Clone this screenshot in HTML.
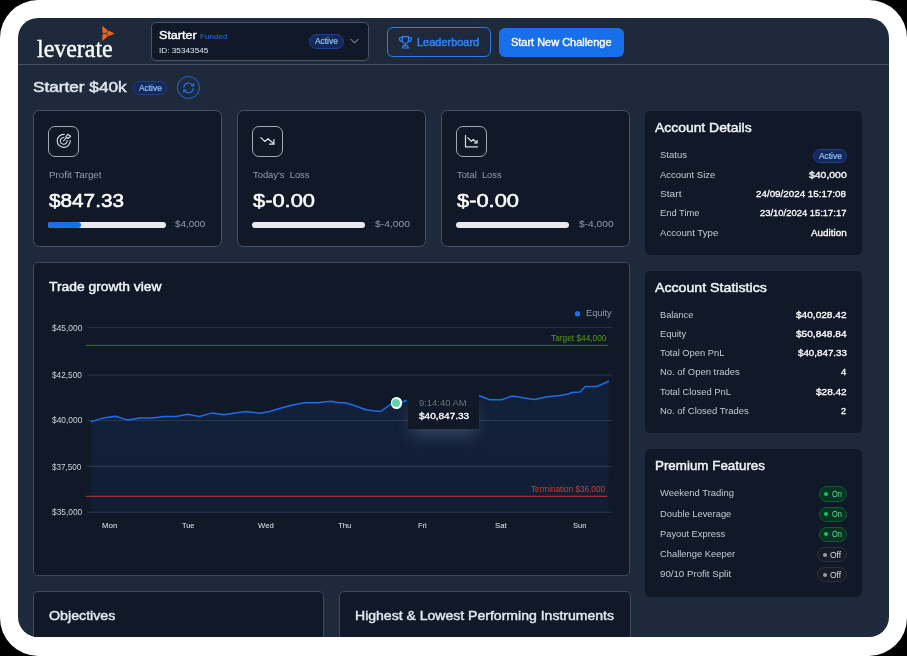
<!DOCTYPE html>
<html><head><meta charset="utf-8"><title>Dashboard</title>
<style>
*{box-sizing:border-box;margin:0;padding:0}
html,body{width:907px;height:656px;overflow:hidden;background:#000;font-family:"Liberation Sans",sans-serif}
#frame{position:absolute;left:0;top:0;width:907px;height:656px;background:#fff;border-radius:38px}
#app{position:absolute;left:0;top:0;width:907px;height:656px;background:#1e293b;clip-path:inset(18px 18px 19px 18px round 20px)}
#texts{position:absolute;left:0;top:0;width:907px;height:656px;clip-path:inset(18px 18px 19px 18px round 20px);will-change:transform}
.t{position:absolute;white-space:pre;line-height:1;transform-origin:0 0}
.a{position:absolute}
.card{position:absolute;background:#111827;border:1px solid #465369;border-radius:6.5px}
.panel{position:absolute;background:#111827;border-radius:5.5px}
.badge{position:absolute;border:1px solid #1c3f8f;background:#14285a;border-radius:8px}
.ibox{position:absolute;width:31px;height:31px;border:1px solid #a3abb8;border-radius:7px}
.bar{position:absolute;height:5.5px;border-radius:3px;background:#e7e9ee}
.on{position:absolute;width:28.2px;height:15.2px;border-radius:8px;border:1px solid #0d5c36;background:#06351f}
.off{position:absolute;width:29.8px;height:14.9px;border-radius:8px;border:1px solid #2b313f;background:#161b26}
.dot{position:absolute;width:4.2px;height:4.2px;border-radius:50%}
svg{position:absolute;overflow:visible}

</style></head><body>
<div id="frame"></div>
<div id="app">
<!-- header -->
<div class="a" style="left:18px;top:64px;width:871px;height:1px;background:#435066"></div>
<svg style="left:98px;top:22px" width="22" height="22" viewBox="0 0 22 22"><g fill="#ee641f"><path d="M4.1 3.7 L9.8 8.4 L8.3 11.1 L4.7 11.1 Z"/><path d="M4.1 19 L4.7 11.8 L8.3 11.8 L9.8 14.5 Z"/><path d="M16.6 11.4 L10.4 8.6 L8.9 11.4 L10.4 14.2 Z"/></g></svg>
<div class="a" style="left:150.6px;top:21.7px;width:218px;height:39.1px;border:1px solid #4a5568;border-radius:5px;background:#111827"></div>
<div class="badge" style="left:309px;top:34px;width:35px;height:15px"></div>
<svg style="left:350px;top:38px" width="10" height="8" viewBox="0 0 10 8"><path d="M1 1.4 L4.5 5 L8 1.4" stroke="#aab3c0" stroke-width="1" fill="none" stroke-linecap="round" stroke-linejoin="round"/></svg>
<div class="a" style="left:387px;top:27px;width:104px;height:30px;border:1px solid #2f7be6;border-radius:6px"></div>
<svg style="left:394px;top:32px" width="24" height="20" viewBox="0 0 24 20"><g stroke="#3384f0" stroke-width="1.15" fill="none" stroke-linecap="round" stroke-linejoin="round"><path d="M8.3 4.6 H14.5 V8 C14.5 10.2 12.9 11.5 11.4 11.5 C9.9 11.5 8.3 10.2 8.3 8 Z"/><path d="M8.3 5.6 H6.2 C5.2 5.6 5.3 6.6 5.4 7.2 C5.6 8.6 6.8 9.6 8.6 9.8"/><path d="M14.5 5.6 H16.6 C17.6 5.6 17.5 6.6 17.4 7.2 C17.2 8.6 16 9.6 14.2 9.8"/><path d="M11.4 11.5 V13.3"/><path d="M8.3 16 L9.3 13.6 H13.5 L14.5 16 Z"/></g></svg>
<div class="a" style="left:499px;top:28px;width:125px;height:29px;border-radius:6px;background:#186fec"></div>
<!-- title row -->
<div class="badge" style="left:133px;top:80.6px;width:34px;height:14.2px"></div>
<div class="a" style="left:176.9px;top:76.3px;width:23.2px;height:23.2px;border:1px solid #1f69d8;border-radius:50%"></div>
<svg style="left:172px;top:72px" width="32" height="32" viewBox="0 0 32 32"><g stroke="#1f74ea" stroke-width="1.15" fill="none" stroke-linecap="round" stroke-linejoin="round"><path d="M11.9 15.2 A4.8 4.8 0 0 1 20.9 13.6"/><path d="M21.3 16.6 A4.8 4.8 0 0 1 12.3 18.2"/><path d="M19.3 13.6 L21.6 14.2 L21.9 11.9 Z" fill="#1f74ea" stroke-width="0.7"/><path d="M13.9 18.2 L11.6 17.6 L11.3 19.9 Z" fill="#1f74ea" stroke-width="0.7"/></g></svg>
<!-- stat cards -->
<div class="card" style="left:33px;top:110px;width:189px;height:137px"></div>
<div class="card" style="left:237px;top:110px;width:189px;height:137px"></div>
<div class="card" style="left:441px;top:110px;width:189px;height:137px"></div>
<div class="ibox" style="left:48px;top:125.7px"></div>
<div class="ibox" style="left:252px;top:125.7px"></div>
<div class="ibox" style="left:456px;top:125.7px"></div>
<svg style="left:52px;top:129px" width="24" height="24" viewBox="0 0 24 24"><g stroke="#d3d7de" stroke-width="1.15" fill="none" stroke-linecap="round" stroke-linejoin="round"><path d="M18.2 11.5 A6.5 6.5 0 1 1 12.2 5.4"/><path d="M15.1 11.6 A3.4 3.4 0 1 1 12 8.5"/><path d="M11.4 11.9 L14.7 8.6"/><path d="M13.8 7.9 L15.8 5.3 L18.6 7.3 L16.1 9.5 Z"/></g></svg>
<svg style="left:256px;top:129px" width="24" height="24" viewBox="0 0 24 24"><g stroke="#e3e6eb" stroke-width="1.25" fill="none" stroke-linecap="round" stroke-linejoin="round"><path d="M4.8 8.6 L8.8 12.4 L12.1 9.7 L17.8 14.9"/><path d="M17.9 10.7 V15 H13.4"/></g></svg>
<svg style="left:460px;top:129px" width="24" height="24" viewBox="0 0 24 24"><g stroke="#d9dce3" stroke-width="1.2" fill="none" stroke-linecap="round" stroke-linejoin="round"><path d="M5.5 6.3 V17.9 H17.4"/><path d="M7.9 8.8 L11.3 12.3 L13.2 10.4 L16.4 13.3"/><path d="M17.4 11.4 V14.3 H14.5 Z" fill="#d9dce3" stroke-width="0.6"/></g></svg>
<div class="bar" style="left:48.3px;top:222px;width:118.2px"></div>
<div class="bar" style="left:48.3px;top:222px;width:32.6px;background:#186fec"></div>
<div class="bar" style="left:252.3px;top:222px;width:113px"></div>
<div class="bar" style="left:456.3px;top:222px;width:113px"></div>
<!-- right panels -->
<div class="panel" style="left:644.5px;top:111px;width:217.5px;height:143.6px"></div>
<div class="badge" style="left:812.8px;top:148.7px;width:34.2px;height:14.4px"></div>
<div class="panel" style="left:644.5px;top:271px;width:217.5px;height:162.4px"></div>
<div class="panel" style="left:644.5px;top:448.6px;width:217.5px;height:148.6px"></div>
<div class="on" style="left:818.8px;top:486.4px"></div><div class="dot" style="left:824px;top:492.0px;background:#1fbe6e"></div>
<div class="on" style="left:818.8px;top:506.6px"></div><div class="dot" style="left:824px;top:512.2px;background:#1fbe6e"></div>
<div class="on" style="left:818.8px;top:526.6px"></div><div class="dot" style="left:824px;top:532.2px;background:#1fbe6e"></div>
<div class="off" style="left:817.2px;top:546.9px"></div><div class="dot" style="left:822.8px;top:552.6px;background:#979ca8"></div>
<div class="off" style="left:817.2px;top:567.2px"></div><div class="dot" style="left:822.8px;top:572.9px;background:#979ca8"></div>
<!-- chart -->
<div class="card" style="left:33px;top:262px;width:597px;height:314px;border-radius:5px;border-color:#3d495e"></div>
<svg style="left:0;top:0" width="907" height="656" viewBox="0 0 907 656">
<defs><linearGradient id="g" x1="0" y1="0" x2="0" y2="1"><stop offset="0" stop-color="#1b66e0" stop-opacity="0.105"/><stop offset="1" stop-color="#1b66e0" stop-opacity="0.07"/></linearGradient></defs>
<g stroke="#2a364c" stroke-width="1"><path d="M87.5 327.3 H612 M87.5 375 H612 M87.5 420.5 H612 M86 466.4 H612 M87.8 512.2 H612"/></g>
<path d="M91.2 421.6 L103.4 417.9 L115.2 416.2 L127.4 419.9 L140.0 418.0 L152.3 418.0 L164.0 416.5 L176.0 416.5 L187.6 414.3 L199.3 416.5 L212.3 412.9 L223.6 414.7 L235.2 412.9 L245.8 411.5 L260.0 413.3 L269.8 411.5 L281.1 408.0 L291.7 405.2 L304.0 402.7 L318.2 402.7 L330.5 401.3 L339.4 402.7 L345.4 402.7 L353.5 405.2 L365.9 409.8 L372.9 410.8 L380.7 411.5 L391.5 403.7 L396.2 402.9 L402.2 402.2 L405.1 400.8 L416.0 399.0 L430.0 398.0 L445.0 399.0 L460.0 397.0 L470.0 396.5 L478.9 395.5 L489.7 399.7 L501.7 399.7 L512.3 396.0 L522.9 397.8 L534.5 399.5 L545.8 397.0 L560.0 395.6 L567.0 394.2 L572.3 392.5 L580.0 392.1 L585.3 386.5 L597.0 386.5 L608.6 381.2 L608.6 512.2 L91.2 512.2 Z" fill="url(#g)"/>
<g stroke="#2a3850" stroke-width="1" opacity="0.8"><path d="M91.5 420.5 H608.5 M91.5 466.4 H608.5"/></g>
<path d="M86 345.4 H608.2" stroke="#427c12" stroke-width="1"/>
<path d="M86 496.3 H607.2" stroke="#bb3a2c" stroke-width="1"/>
<path d="M91.2 421.6 L103.4 417.9 L115.2 416.2 L127.4 419.9 L140.0 418.0 L152.3 418.0 L164.0 416.5 L176.0 416.5 L187.6 414.3 L199.3 416.5 L212.3 412.9 L223.6 414.7 L235.2 412.9 L245.8 411.5 L260.0 413.3 L269.8 411.5 L281.1 408.0 L291.7 405.2 L304.0 402.7 L318.2 402.7 L330.5 401.3 L339.4 402.7 L345.4 402.7 L353.5 405.2 L365.9 409.8 L372.9 410.8 L380.7 411.5 L391.5 403.7 L396.2 402.9 L402.2 402.2 L405.1 400.8 L416.0 399.0 L430.0 398.0 L445.0 399.0 L460.0 397.0 L470.0 396.5 L478.9 395.5 L489.7 399.7 L501.7 399.7 L512.3 396.0 L522.9 397.8 L534.5 399.5 L545.8 397.0 L560.0 395.6 L567.0 394.2 L572.3 392.5 L580.0 392.1 L585.3 386.5 L597.0 386.5 L608.6 381.2" stroke="#1a6eea" stroke-width="1.5" fill="none" stroke-linejoin="round" stroke-linecap="round"/>
<circle cx="577.5" cy="313.8" r="2.7" fill="#1a6eea"/>
</svg>
<div class="a" style="left:408.4px;top:394px;width:70.6px;height:34.7px;background:#111827;box-shadow:0 10px 16px -3px rgba(140,160,200,0.30)"></div>
<svg style="left:400px;top:394px" width="10" height="12" viewBox="0 0 10 12"><path d="M5 3.5 L8.6 0 V9 Z" fill="#111827"/></svg>
<div class="a" style="left:390.5px;top:397.2px;width:11.4px;height:11.4px;border-radius:50%;background:#fff"></div>
<div class="a" style="left:391.9px;top:398.6px;width:8.6px;height:8.6px;border-radius:50%;background:#5fd4a6"></div>
<!-- bottom cards -->
<div class="card" style="left:33px;top:591px;width:291px;height:60px;border-radius:5px;border-color:#3d495e"></div>
<div class="card" style="left:339px;top:591px;width:291.5px;height:60px;border-radius:5px;border-color:#3d495e"></div>
</div>

<div id="texts">
<span class="t" id="t0" style="left:36.8px;top:35.9px;font-size:25px;color:#ffffff;font-family:'Liberation Serif',serif;transform:scaleX(0.9569);-webkit-text-stroke:0.4px #fff;">leverate</span>
<span class="t" id="t1" style="left:158.6px;top:29.9px;font-size:11.8px;color:#ffffff;transform:scaleX(1.0648);-webkit-text-stroke:0.40px #ffffff;">Starter</span>
<span class="t" id="t2" style="left:199.6px;top:33.1px;font-size:8px;color:#2673ea;transform:scaleX(1.0096);">Funded</span>
<span class="t" id="t3" style="left:158.6px;top:47.3px;font-size:8.1px;color:#e2e8f0;transform:scaleX(1.0163);">ID: 35343545</span>
<span class="t" id="t4" style="left:315.4px;top:37.4px;font-size:8.3px;color:#8fc0fb;transform:scaleX(1.0091);-webkit-text-stroke:0.2px #8fc0fb;">Active</span>
<span class="t" id="t5" style="left:416.8px;top:38.1px;font-size:10.3px;color:#3384f0;transform:scaleX(1.0650);-webkit-text-stroke:0.45px #3384f0;">Leaderboard</span>
<span class="t" id="t6" style="left:511.0px;top:37.7px;font-size:10.3px;color:#ffffff;transform:scaleX(1.0642);-webkit-text-stroke:0.35px #fff;">Start New Challenge</span>
<span class="t" id="t7" style="left:33.4px;top:79.7px;font-size:14.7px;color:#dfe4ec;transform:scaleX(1.1698);-webkit-text-stroke:0.5px #dfe4ec;">Starter $40k</span>
<span class="t" id="t8" style="left:138.7px;top:83.8px;font-size:8.3px;color:#8fc0fb;transform:scaleX(1.0091);-webkit-text-stroke:0.2px #8fc0fb;">Active</span>
<span class="t" id="t9" style="left:48.7px;top:170.2px;font-size:9.4px;color:#949dac;transform:scaleX(1.0422);">Profit Target</span>
<span class="t" id="t10" style="left:48.9px;top:190.6px;font-size:19.2px;color:#ffffff;transform:scaleX(1.0813);-webkit-text-stroke:0.55px #fff;">$847.33</span>
<span class="t" id="t11" style="left:175.2px;top:219.4px;font-size:9.5px;color:#949dac;transform:scaleX(1.0391);">$4,000</span>
<span class="t" id="t12" style="left:252.7px;top:170.2px;font-size:9.4px;color:#949dac;transform:scaleX(0.9997);">Today's  Loss</span>
<span class="t" id="t13" style="left:252.9px;top:190.6px;font-size:19.2px;color:#ffffff;transform:scaleX(1.1396);-webkit-text-stroke:0.55px #fff;">$-0.00</span>
<span class="t" id="t14" style="left:374.5px;top:219.4px;font-size:9.5px;color:#949dac;transform:scaleX(1.0827);">$-4,000</span>
<span class="t" id="t15" style="left:456.7px;top:170.2px;font-size:9.4px;color:#949dac;transform:scaleX(0.9949);">Total  Loss</span>
<span class="t" id="t16" style="left:456.9px;top:190.6px;font-size:19.2px;color:#ffffff;transform:scaleX(1.1396);-webkit-text-stroke:0.55px #fff;">$-0.00</span>
<span class="t" id="t17" style="left:578.8px;top:219.4px;font-size:9.5px;color:#949dac;transform:scaleX(1.0734);">$-4,000</span>
<span class="t" id="t18" style="left:655.2px;top:121.7px;font-size:12.8px;color:#f1f5f9;transform:scaleX(1.0863);-webkit-text-stroke:0.44px #f1f5f9;">Account Details</span>
<span class="t" id="t19" style="left:659.8px;top:151.2px;font-size:9.3px;color:#c3cad6;transform:scaleX(1.0243);">Status</span>
<span class="t" id="t20" style="left:659.8px;top:171.0px;font-size:9.3px;color:#c3cad6;transform:scaleX(1.0191);">Account Size</span>
<span class="t" id="t21" style="left:808.5px;top:171.1px;font-size:9.2px;color:#ffffff;transform:scaleX(1.1349);-webkit-text-stroke:0.31px #ffffff;">$40,000</span>
<span class="t" id="t22" style="left:659.8px;top:190.1px;font-size:9.3px;color:#c3cad6;transform:scaleX(1.0947);">Start</span>
<span class="t" id="t23" style="left:756.2px;top:190.2px;font-size:9.2px;color:#ffffff;transform:scaleX(1.0675);-webkit-text-stroke:0.31px #ffffff;">24/09/2024 15:17:08</span>
<span class="t" id="t24" style="left:659.8px;top:209.4px;font-size:9.3px;color:#c3cad6;transform:scaleX(1.0056);">End Time</span>
<span class="t" id="t25" style="left:759.8px;top:208.5px;font-size:9.2px;color:#ffffff;transform:scaleX(1.0248);-webkit-text-stroke:0.31px #ffffff;">23/10/2024 15:17:17</span>
<span class="t" id="t26" style="left:659.8px;top:228.6px;font-size:9.3px;color:#c3cad6;transform:scaleX(1.0379);">Account Type</span>
<span class="t" id="t27" style="left:810.5px;top:228.7px;font-size:9.2px;color:#ffffff;transform:scaleX(1.0752);-webkit-text-stroke:0.31px #ffffff;">Audition</span>
<span class="t" id="t28" style="left:818.6px;top:151.6px;font-size:8.3px;color:#8fc0fb;transform:scaleX(1.0091);-webkit-text-stroke:0.2px #8fc0fb;">Active</span>
<span class="t" id="t29" style="left:655.2px;top:281.7px;font-size:12.8px;color:#f1f5f9;transform:scaleX(1.1069);-webkit-text-stroke:0.44px #f1f5f9;">Account Statistics</span>
<span class="t" id="t30" style="left:659.8px;top:310.9px;font-size:9.3px;color:#c3cad6;transform:scaleX(0.9908);">Balance</span>
<span class="t" id="t31" style="left:795.9px;top:311.0px;font-size:9.2px;color:#ffffff;transform:scaleX(1.0982);-webkit-text-stroke:0.31px #ffffff;">$40,028.42</span>
<span class="t" id="t32" style="left:659.8px;top:330.1px;font-size:9.3px;color:#c3cad6;transform:scaleX(1.0099);">Equity</span>
<span class="t" id="t33" style="left:795.9px;top:330.2px;font-size:9.2px;color:#ffffff;transform:scaleX(1.0982);-webkit-text-stroke:0.31px #ffffff;">$50,848.84</span>
<span class="t" id="t34" style="left:659.8px;top:349.3px;font-size:9.3px;color:#c3cad6;transform:scaleX(1.0048);">Total Open PnL</span>
<span class="t" id="t35" style="left:797.5px;top:349.4px;font-size:9.2px;color:#ffffff;transform:scaleX(1.0634);-webkit-text-stroke:0.31px #ffffff;">$40,847.33</span>
<span class="t" id="t36" style="left:659.8px;top:367.5px;font-size:9.3px;color:#c3cad6;transform:scaleX(1.0158);">No. of Open trades</span>
<span class="t" id="t37" style="left:841.1px;top:367.6px;font-size:9.2px;color:#ffffff;transform:scaleX(1.0341);-webkit-text-stroke:0.31px #ffffff;">4</span>
<span class="t" id="t38" style="left:659.8px;top:387.8px;font-size:9.3px;color:#c3cad6;transform:scaleX(1.0086);">Total Closed PnL</span>
<span class="t" id="t39" style="left:815.7px;top:387.9px;font-size:9.2px;color:#ffffff;transform:scaleX(1.0922);-webkit-text-stroke:0.31px #ffffff;">$28.42</span>
<span class="t" id="t40" style="left:659.8px;top:407.0px;font-size:9.3px;color:#c3cad6;transform:scaleX(1.0155);">No. of Closed Trades</span>
<span class="t" id="t41" style="left:841.3px;top:407.1px;font-size:9.2px;color:#ffffff;transform:scaleX(0.9951);-webkit-text-stroke:0.31px #ffffff;">2</span>
<span class="t" id="t42" style="left:655.2px;top:459.7px;font-size:12.8px;color:#f1f5f9;transform:scaleX(1.0451);-webkit-text-stroke:0.44px #f1f5f9;">Premium Features</span>
<span class="t" id="t43" style="left:659.8px;top:489.4px;font-size:9.3px;color:#c3cad6;transform:scaleX(1.0165);">Weekend Trading</span>
<span class="t" id="t44" style="left:831.8px;top:491.3px;font-size:8.2px;color:#74d9a5;transform:scaleX(0.9051);">On</span>
<span class="t" id="t45" style="left:659.8px;top:509.9px;font-size:9.3px;color:#c3cad6;transform:scaleX(1.0069);">Double Leverage</span>
<span class="t" id="t46" style="left:831.8px;top:510.5px;font-size:8.2px;color:#74d9a5;transform:scaleX(0.9051);">On</span>
<span class="t" id="t47" style="left:659.8px;top:530.0px;font-size:9.3px;color:#c3cad6;transform:scaleX(1.0027);">Payout Express</span>
<span class="t" id="t48" style="left:831.8px;top:530.5px;font-size:8.2px;color:#74d9a5;transform:scaleX(0.9051);">On</span>
<span class="t" id="t49" style="left:659.8px;top:550.1px;font-size:9.3px;color:#c3cad6;transform:scaleX(1.0076);">Challenge Keeper</span>
<span class="t" id="t50" style="left:830.3px;top:552.0px;font-size:8.2px;color:#d8dbe2;transform:scaleX(1.0388);">Off</span>
<span class="t" id="t51" style="left:659.8px;top:570.2px;font-size:9.3px;color:#c3cad6;transform:scaleX(1.0422);">90/10 Profit Split</span>
<span class="t" id="t52" style="left:830.3px;top:572.3px;font-size:8.2px;color:#d8dbe2;transform:scaleX(1.0388);">Off</span>
<span class="t" id="t53" style="left:49.4px;top:281.2px;font-size:12.8px;color:#f1f5f9;transform:scaleX(1.0809);-webkit-text-stroke:0.44px #f1f5f9;">Trade growth view</span>
<span class="t" id="t54" style="left:52.1px;top:323.7px;font-size:8.5px;color:#cbd5e1;transform:scaleX(0.9891);">$45,000</span>
<span class="t" id="t55" style="left:52.1px;top:370.7px;font-size:8.5px;color:#cbd5e1;transform:scaleX(0.9729);">$42,500</span>
<span class="t" id="t56" style="left:52.1px;top:416.2px;font-size:8.5px;color:#cbd5e1;transform:scaleX(0.9891);">$40,000</span>
<span class="t" id="t57" style="left:52.1px;top:463.4px;font-size:8.5px;color:#cbd5e1;transform:scaleX(0.9566);">$37,500</span>
<span class="t" id="t58" style="left:52.1px;top:508.1px;font-size:8.5px;color:#cbd5e1;transform:scaleX(0.9826);">$35,000</span>
<span class="t" id="t59" style="left:585.5px;top:308.8px;font-size:8.8px;color:#949dac;transform:scaleX(1.0469);">Equity</span>
<span class="t" id="t60" style="left:550.6px;top:335.0px;font-size:8.2px;color:#559a18;transform:scaleX(1.0160);">Target $44,000</span>
<span class="t" id="t61" style="left:531.3px;top:485.9px;font-size:8.2px;color:#c84132;transform:scaleX(0.9973);">Termination $36,000</span>
<span class="t" id="t62" style="left:101.8px;top:522.0px;font-size:8px;color:#e2e8f0;transform:scaleX(0.9896);">Mon</span>
<span class="t" id="t63" style="left:181.6px;top:522.0px;font-size:8px;color:#e2e8f0;transform:scaleX(0.9185);">Tue</span>
<span class="t" id="t64" style="left:258.2px;top:522.0px;font-size:8px;color:#e2e8f0;transform:scaleX(0.9686);">Wed</span>
<span class="t" id="t65" style="left:337.6px;top:522.0px;font-size:8px;color:#e2e8f0;transform:scaleX(0.9712);">Thu</span>
<span class="t" id="t66" style="left:418.1px;top:522.0px;font-size:8px;color:#e2e8f0;transform:scaleX(0.9434);">Fri</span>
<span class="t" id="t67" style="left:495.0px;top:522.0px;font-size:8px;color:#e2e8f0;transform:scaleX(0.9654);">Sat</span>
<span class="t" id="t68" style="left:572.6px;top:522.0px;font-size:8px;color:#e2e8f0;transform:scaleX(0.9344);">Sun</span>
<span class="t" id="t69" style="left:418.7px;top:398.5px;font-size:8.6px;color:#6b7280;transform:scaleX(1.0946);">9:14:40 AM</span>
<span class="t" id="t70" style="left:418.7px;top:411.8px;font-size:9px;color:#ffffff;transform:scaleX(1.1144);-webkit-text-stroke:0.31px #ffffff;">$40,847.33</span>
<span class="t" id="t71" style="left:48.9px;top:608.6px;font-size:13px;color:#e2e8f0;transform:scaleX(1.0938);-webkit-text-stroke:0.44px #e2e8f0;">Objectives</span>
<span class="t" id="t72" style="left:354.6px;top:608.6px;font-size:13px;color:#e2e8f0;transform:scaleX(1.0797);-webkit-text-stroke:0.44px #e2e8f0;">Highest &amp; Lowest Performing Instruments</span>
</div>
</body></html>
